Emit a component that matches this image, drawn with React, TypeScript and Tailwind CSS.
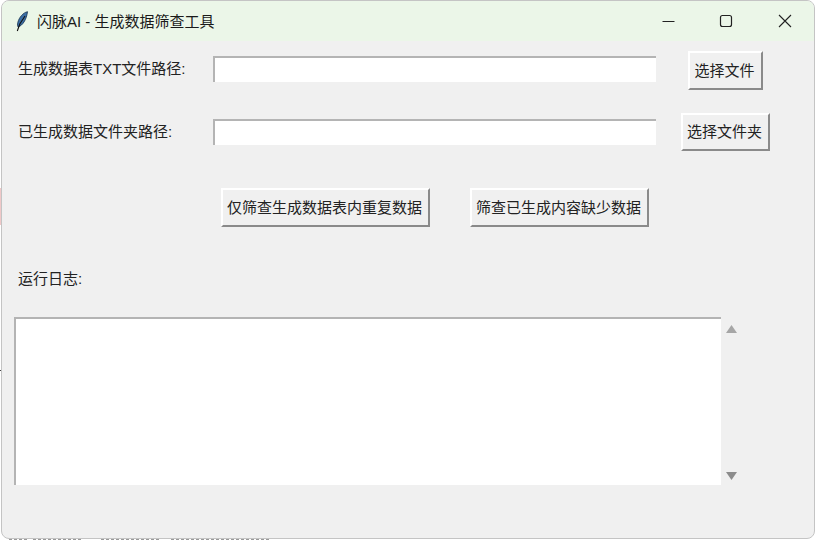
const FONT = "font-['Liberation_Sans','Noto_Sans_CJK_SC',sans-serif]";

function TkButton({ label, className }: { label: string; className: string }) {
  return (
    <button
      type="button"
      className={`flex shrink-0 items-center justify-center border-2 border-t-white border-l-white border-r-[#8a8a8a] border-b-[#8a8a8a] bg-[#f0f0f0] pr-[2px] pb-px text-[15px] leading-none text-[#222] ${className}`}
    >
      {label}
    </button>
  );
}

function PathRow({
  label,
  button,
  buttonClass,
  fieldClass,
  className,
}: {
  label: string;
  button: string;
  buttonClass: string;
  fieldClass: string;
  className: string;
}) {
  return (
    <div className={`flex items-start ${className}`}>
      <div className={`w-[211px] shrink-0 pl-[16px] text-[15px] leading-[26px] text-[#222] ${fieldClass}`}>{label}</div>
      <div className={`h-[26px] w-[443px] shrink-0 border-t-2 border-l-2 border-t-[#b4b4b4] border-l-[#b4b4b4] bg-white ${fieldClass}`} />
      <TkButton label={button} className={buttonClass} />
    </div>
  );
}

export default function App() {
  return (
    <div className={`flex h-[540px] w-[815px] overflow-hidden bg-white ${FONT}`}>
      <div className="flex w-px shrink-0 flex-col">
        <div className="h-[188px] shrink-0" />
        <div className="h-[37px] shrink-0 bg-[#f0c8c8]" />
        <div className="h-[145px] shrink-0" />
        <div className="h-px shrink-0 bg-[#444]" />
      </div>
      <div className="w-[814px] shrink-0">
        <div className="flex h-[539px] flex-col overflow-hidden rounded-[8px] border border-[#c4c4c4] bg-[#f0f0f0]">
          <div className="flex h-[40px] shrink-0 items-center bg-[#ebf6e8]">
            <svg width="14" height="21" viewBox="0 0 14 21" className="ml-[13px]">
              <path d="M12.500 .7C8 1.700 4 6.500 2.800 11.500c-.5 2-.3 3.500.3 4.500C7.500 14.500 11.500 9 12.500 .7Z" fill="#3b6ea5" stroke="#16324f" strokeWidth="0.8" />
              <path d="M10 5 4.800 13 2.300 20" fill="none" stroke="#111" strokeWidth="1.1" />
            </svg>
            <div className="ml-[8px] text-[15px] leading-none text-[#1a1a1a]">闪脉AI - 生成数据筛查工具</div>
            <div className="ml-auto flex items-center">
              <svg width="46" height="40" viewBox="0 0 46 40" className="block">
                <path d="M17.500 20.500h12" stroke="#222" strokeWidth="1" />
              </svg>
              <svg width="46" height="40" viewBox="0 0 46 40" className="ml-[13px] block">
                <rect x="16.500" y="14.500" width="11" height="11" rx="2" fill="none" stroke="#222" strokeWidth="1.200" />
              </svg>
              <svg width="46" height="40" viewBox="0 0 46 40" className="ml-[13px] mr-[5px] block">
                <path d="M16 14l12 12M28 14 16 26" stroke="#222" strokeWidth="1.100" />
              </svg>
            </div>
          </div>

          <PathRow
            label="生成数据表TXT文件路径:"
            button="选择文件"
            buttonClass="ml-[32px] h-[39px] w-[75px]"
            fieldClass="mt-[5px]"
            className="mt-[10px] h-[39px]"
          />
          <PathRow
            label="已生成数据文件夹路径:"
            button="选择文件夹"
            buttonClass="ml-[25px] h-[38px] w-[89px]"
            fieldClass="mt-[6px]"
            className="mt-[23px] h-[38px]"
          />

          <div className="mt-[37px] flex h-[39px] pl-[219px]">
            <TkButton label="仅筛查生成数据表内重复数据" className="h-[39px] w-[209px]" />
            <TkButton label="筛查已生成内容缺少数据" className="ml-[40px] h-[39px] w-[179px]" />
          </div>

          <div className="mt-[42px] pl-[16px] text-[15px] leading-[20px] text-[#222]">运行日志:</div>

          <div className="mt-[28px] flex pl-[12px]">
            <div className="h-[168px] w-[707px] border-t-2 border-l-2 border-t-[#b4b4b4] border-l-[#b4b4b4] bg-white" />
            <div className="ml-[4px] flex h-[168px] w-[12px] flex-col items-center justify-between pt-[8px] pb-[5px]">
              <svg width="11" height="8" viewBox="0 0 11 8"><path d="M5.500 0 11 8H0Z" fill="#a6a6a6" /></svg>
              <svg width="11" height="8" viewBox="0 0 11 8"><path d="M0 0h11L5.500 8Z" fill="#8c8c8c" /></svg>
            </div>
          </div>
        </div>
        <svg width="300" height="1" viewBox="0 0 300 1" className="block">
          <path d="M8 .5h20M32 .5h50M100 .5h60M170 .5h100" stroke="#999" strokeWidth="1" strokeDasharray="3 2" />
        </svg>
      </div>
    </div>
  );
}
